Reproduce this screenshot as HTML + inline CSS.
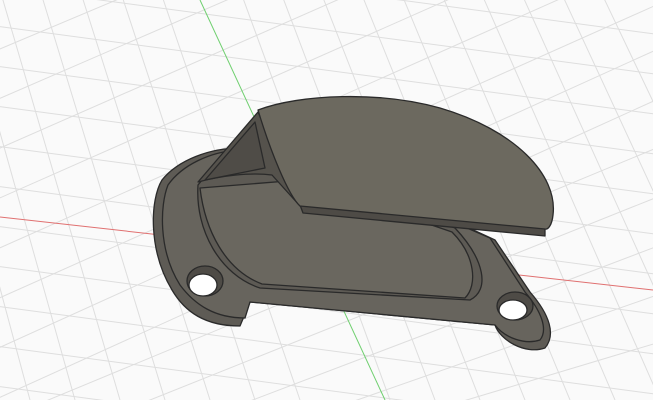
<!DOCTYPE html>
<html><head><style>html,body{margin:0;padding:0;background:#fafafa;overflow:hidden;width:653px;height:400px}svg{display:block}</style></head>
<body>
<svg width="653" height="400" viewBox="0 0 653 400" xmlns="http://www.w3.org/2000/svg">
<rect width="653" height="400" fill="#fafafa"/>
<g stroke="#dedede" stroke-width="1" fill="none">
<path d="M-50,20 L700,120 M-50,60 L700,160 M-50,100 L700,200 M-50,140 L700,240 M-50,180 L700,280 M-50,220 L700,320 M-50,260 L700,360 M-50,300 L700,400 M-50,340 L700,440 M-50,380 L700,480 M-50,-20 L700,80 M-50,-60 L700,40 M-50,-100 L700,0 M-50,420 L700,520"/>
<path d="M0,-10 L120,400 M40,-10 L165,400 M80,-10 L210,400 M120,-10 L255,400 M160,-10 L300,400 M240,-10 L390,400 M280,-10 L435,400 M320,-10 L480,400 M360,-10 L525,400 M400,-10 L570,400 M440,-10 L615,400 M480,-10 L660,400 M520,-10 L705,400 M560,-10 L750,400 M600,-10 L795,400 M-40,-10 L75,400 M-80,-10 L30,400"/>
<path d="M-50,120 L250,-10 M-50,170 L360,-10 M-50,220 L470,-10 M-50,270 L580,-10 M-50,320 L690,-10 M-50,370 L700,30 M-50,420 L700,80 M0,420 L700,130 M100,420 L700,180 M200,420 L700,230 M300,420 L700,280 M400,420 L700,330 M-50,70 L140,-10"/>
</g>
<line x1="0" y1="217" x2="653" y2="290" stroke="#e07070" stroke-width="1"/>
<line x1="200" y1="0" x2="385" y2="400" stroke="#6fcf6f" stroke-width="1"/>
<g stroke="#2a2a2a" stroke-width="1.3" stroke-linejoin="round">
<path d="M162,180 C150,200 148,250 172,290 C185,312 205,326 240,326 L250,302 L495,325 C500,340 525,355 545,348 C556,335 550,315 530,292 L495,240 L300,150 L240,148 C210,148 178,160 162,180 Z" fill="#5e5b55"/>
<path d="M168,185 C160,205 158,250 180,285 C195,305 215,318 245,318 L250,302 L495,325 C505,338 525,345 540,340 C548,330 542,312 525,292 L490,238 L300,155 L238,150 C210,152 182,165 168,185 Z" fill="#67645d"/>
<path d="M198,185 C195,230 220,275 260,288 L470,300 C490,290 485,260 455,228 L300,160 L240,160 C222,165 205,175 198,185 Z" fill="#5d5a54"/>
<path d="M200,188 C205,230 225,270 262,284 L465,298 C478,285 475,255 452,232 L300,180 Z" fill="#6a675f"/>
<path d="M198,182 L258,112 L300,206 L272,175 C250,172 220,176 198,182 Z" fill="#55524c"/>
<path d="M205,180 L255,122 L265,168 Z" fill="#4f4c47"/>
<path d="M300,205 L545,228 L545,236 L303,213 Z" fill="#4e4b46"/>
<path d="M258,110 C300,94 380,91 440,108 C515,130 558,175 553,215 C552,225 548,230 545,229 L300,206 C288,195 270,150 258,110 Z" fill="#6c695f"/>
<ellipse cx="205" cy="281" rx="18" ry="15" fill="#4e4b46"/>
<ellipse cx="203" cy="285" rx="14" ry="11" fill="#ffffff"/>
<ellipse cx="515" cy="306" rx="18" ry="14" fill="#4e4b46"/>
<ellipse cx="513" cy="310" rx="14" ry="10" fill="#ffffff"/>
</g>
</svg>
</body></html>
